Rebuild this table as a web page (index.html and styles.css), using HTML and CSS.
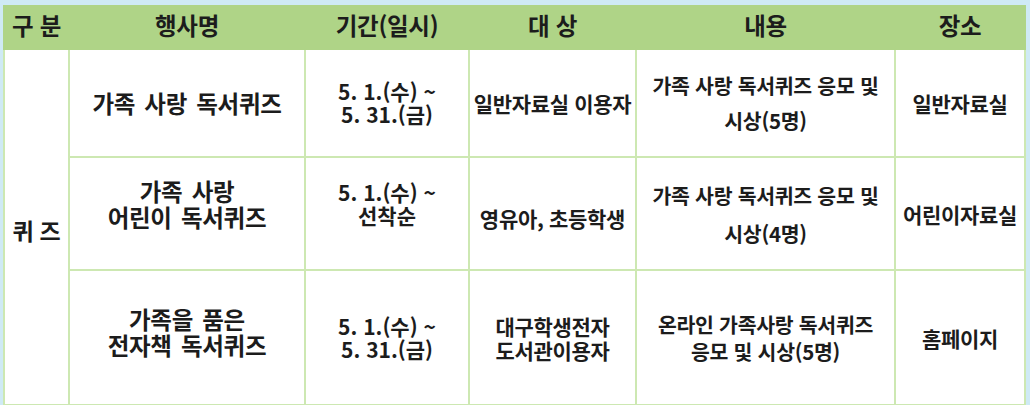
FILE: index.html
```html
<!DOCTYPE html>
<html lang="ko">
<head>
<meta charset="utf-8">
<title>가족 사랑 독서퀴즈</title>
<link rel="stylesheet" href="styles.css">
</head>
<body>
<table class="events">
  <colgroup>
    <col class="c-type">
    <col class="c-name">
    <col class="c-date">
    <col class="c-target">
    <col class="c-content">
    <col class="c-place">
  </colgroup>
  <thead>
    <tr class="head-row">
      <th>구 분</th>
      <th>행사명</th>
      <th>기간(일시)</th>
      <th>대 상</th>
      <th>내용</th>
      <th>장소</th>
    </tr>
  </thead>
  <tbody>
    <tr class="row-1">
      <td class="type" rowspan="3">퀴 즈</td>
      <td class="name">가족 사랑 독서퀴즈</td>
      <td class="date">5. 1.(수) ~<br>5. 31.(금)</td>
      <td class="target">일반자료실 이용자</td>
      <td class="content tall">가족 사랑 독서퀴즈 응모 및<br>시상(5명)</td>
      <td class="place">일반자료실</td>
    </tr>
    <tr class="row-2">
      <td class="name raised">가족 사랑<br>어린이 독서퀴즈</td>
      <td class="date raised">5. 1.(수) ~<br>선착순</td>
      <td class="target lowered">영유아, 초등학생</td>
      <td class="content taller">가족 사랑 독서퀴즈 응모 및<br>시상(4명)</td>
      <td class="place">어린이자료실</td>
    </tr>
    <tr class="row-3">
      <td class="name raised-sm">가족을 품은<br>전자책 독서퀴즈</td>
      <td class="date">5. 1.(수) ~<br>5. 31.(금)</td>
      <td class="target">대구학생전자<br>도서관이용자</td>
      <td class="content">온라인 가족사랑 독서퀴즈<br>응모 및 시상(5명)</td>
      <td class="place">홈페이지</td>
    </tr>
  </tbody>
</table>
</body>
</html>
```

FILE: styles.css
```css
html, body {
  margin: 0;
  padding: 0;
  background: #cfeaf5;
  height: 405px;
  overflow: hidden;
}

body {
  font-family: "Noto Sans CJK KR", "Noto Sans", sans-serif;
  color: #1c1c1c;
  padding: 5px 6px 0 3px;
}

.events {
  width: 1021px;
  border-collapse: collapse;
  table-layout: fixed;
  background: #ffffff;
}

.c-type { width: 65px; }
.c-name { width: 236px; }
.c-date { width: 164px; }
.c-target { width: 167px; }
.c-content { width: 259px; }
.c-place { width: 130px; }

.events th,
.events td {
  border: 2px solid #cde8b2;
  text-align: center;
  vertical-align: middle;
  padding: 0;
  overflow: hidden;
  white-space: nowrap;
}

.head-row { height: 43px; }
.head-row th {
  background: #afd487;
  border-color: #afd487;
  font-size: 23.5px;
  font-weight: 700;
  line-height: 28px;
  padding-bottom: 5px;
  letter-spacing: -0.3px;
}

.row-1 { height: 108px; }
.row-2 { height: 113px; }
.row-3 { height: 135px; }

.events td {
  font-size: 21px;
  font-weight: 700;
  line-height: 24px;
  letter-spacing: -0.3px;
}

.type {
  font-size: 23px !important;
  padding-top: 6px !important;
}

.name {
  font-size: 23.5px !important;
  word-spacing: 3px;
  line-height: 26px !important;
}

.date {
  font-size: 21px;
  line-height: 23px !important;
  letter-spacing: 0 !important;
}

.content {
  font-size: 20.5px !important;
  line-height: 27px !important;
}
.content.tall { line-height: 35px !important; }
.content.taller { line-height: 38px !important; }

.raised { padding-bottom: 20px !important; }
.raised-sm { padding-bottom: 12px !important; }
.lowered { padding-top: 8px !important; }
```
